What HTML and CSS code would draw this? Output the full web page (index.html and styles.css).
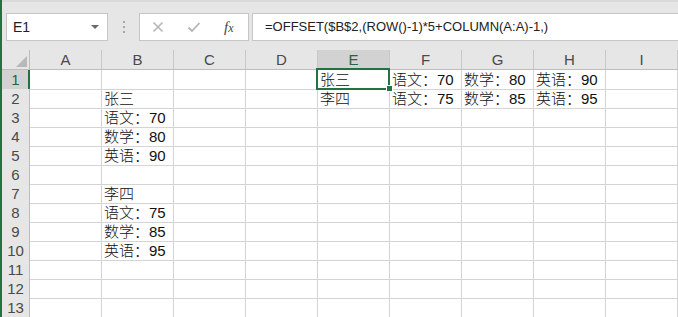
FILE: index.html
```html
<!DOCTYPE html>
<html lang="zh-CN">
<head>
  <meta charset="UTF-8">
  <title>OFFSET</title>
  <link rel="stylesheet" href="styles.css">
</head>
<body>
  <!-- Formula bar -->
  <div class="toolbar">
    <div class="name-box">
      <span>E1</span>
      <span class="caret"></span>
    </div>
    <div class="grip"><i></i><i></i><i></i></div>
    <div class="buttons">
      <svg class="btn" width="12" height="12" viewBox="0 0 12 12"><path d="M1.5 1.5 L10.5 10.5 M10.5 1.5 L1.5 10.5" stroke="#b5b5b5" stroke-width="1.6" fill="none"/></svg>
      <svg class="btn" width="14" height="12" viewBox="0 0 14 12"><path d="M1.5 6.5 L5 10 L12.5 2" stroke="#b5b5b5" stroke-width="1.8" fill="none"/></svg>
      <span class="fx">f<small>x</small></span>
    </div>
    <div class="formula">=OFFSET($B$2,(ROW()-1)*5+COLUMN(A:A)-1,)</div>
  </div>

  <!-- Sheet -->
  <div class="sheet">
    <div class="row head">
      <div class="corner"></div>
      <div class="ch">A</div><div class="ch">B</div><div class="ch">C</div><div class="ch">D</div>
      <div class="ch sel">E</div><div class="ch">F</div><div class="ch">G</div><div class="ch">H</div><div class="ch">I</div>
    </div>
    <div class="row">
      <div class="rh sel">1</div>
      <div class="c"></div><div class="c"></div><div class="c"></div><div class="c"></div>
      <div class="c active">张三</div><div class="c">语文：70</div><div class="c">数学：80</div><div class="c">英语：90</div><div class="c"></div>
    </div>
    <div class="row">
      <div class="rh">2</div>
      <div class="c"></div><div class="c">张三</div><div class="c"></div><div class="c"></div>
      <div class="c">李四</div><div class="c">语文：75</div><div class="c">数学：85</div><div class="c">英语：95</div><div class="c"></div>
    </div>
    <div class="row">
      <div class="rh">3</div>
      <div class="c"></div><div class="c">语文：70</div><div class="c"></div><div class="c"></div>
      <div class="c"></div><div class="c"></div><div class="c"></div><div class="c"></div><div class="c"></div>
    </div>
    <div class="row">
      <div class="rh">4</div>
      <div class="c"></div><div class="c">数学：80</div><div class="c"></div><div class="c"></div>
      <div class="c"></div><div class="c"></div><div class="c"></div><div class="c"></div><div class="c"></div>
    </div>
    <div class="row">
      <div class="rh">5</div>
      <div class="c"></div><div class="c">英语：90</div><div class="c"></div><div class="c"></div>
      <div class="c"></div><div class="c"></div><div class="c"></div><div class="c"></div><div class="c"></div>
    </div>
    <div class="row">
      <div class="rh">6</div>
      <div class="c"></div><div class="c"></div><div class="c"></div><div class="c"></div>
      <div class="c"></div><div class="c"></div><div class="c"></div><div class="c"></div><div class="c"></div>
    </div>
    <div class="row">
      <div class="rh">7</div>
      <div class="c"></div><div class="c">李四</div><div class="c"></div><div class="c"></div>
      <div class="c"></div><div class="c"></div><div class="c"></div><div class="c"></div><div class="c"></div>
    </div>
    <div class="row">
      <div class="rh">8</div>
      <div class="c"></div><div class="c">语文：75</div><div class="c"></div><div class="c"></div>
      <div class="c"></div><div class="c"></div><div class="c"></div><div class="c"></div><div class="c"></div>
    </div>
    <div class="row">
      <div class="rh">9</div>
      <div class="c"></div><div class="c">数学：85</div><div class="c"></div><div class="c"></div>
      <div class="c"></div><div class="c"></div><div class="c"></div><div class="c"></div><div class="c"></div>
    </div>
    <div class="row">
      <div class="rh">10</div>
      <div class="c"></div><div class="c">英语：95</div><div class="c"></div><div class="c"></div>
      <div class="c"></div><div class="c"></div><div class="c"></div><div class="c"></div><div class="c"></div>
    </div>
    <div class="row">
      <div class="rh">11</div>
      <div class="c"></div><div class="c"></div><div class="c"></div><div class="c"></div>
      <div class="c"></div><div class="c"></div><div class="c"></div><div class="c"></div><div class="c"></div>
    </div>
    <div class="row">
      <div class="rh">12</div>
      <div class="c"></div><div class="c"></div><div class="c"></div><div class="c"></div>
      <div class="c"></div><div class="c"></div><div class="c"></div><div class="c"></div><div class="c"></div>
    </div>
    <div class="row">
      <div class="rh">13</div>
      <div class="c"></div><div class="c"></div><div class="c"></div><div class="c"></div>
      <div class="c"></div><div class="c"></div><div class="c"></div><div class="c"></div><div class="c"></div>
    </div>
  </div>
</body>
</html>
```

FILE: styles.css
```css
/* Reset */
* {
  margin: 0;
  padding: 0;
  box-sizing: border-box;
}
body {
  width: 678px;
  height: 317px;
  overflow: hidden;
  background-color: #fff;
  border-left: 2px solid #217346;
  font-family: "Liberation Sans", "Noto Sans CJK SC", sans-serif;
}

/* Formula bar */
.toolbar {
  height: 50px;
  display: flex;
  align-items: flex-start;
  padding: 11px 0 0 4px;
  background-color: #e6e6e6;
  border-top: 2px solid #dadada;
}
.name-box {
  width: 102px;
  height: 28px;
  display: flex;
  align-items: center;
  justify-content: space-between;
  padding: 0 6px 0 6px;
  background-color: #fff;
  border: 1px solid #c6c6c6;
  font-size: 14px;
  color: #222;
}
.caret {
  width: 0;
  height: 0;
  border-left: 4px solid transparent;
  border-right: 4px solid transparent;
  border-top: 4px solid #6a6a6a;
  margin-right: 2px;
}
.grip {
  width: 31px;
  height: 28px;
  display: flex;
  flex-direction: column;
  align-items: center;
  justify-content: center;
  gap: 3px;
}
.grip i {
  width: 2px;
  height: 2px;
  background-color: #a8a8a8;
}
.buttons {
  width: 110px;
  height: 28px;
  display: flex;
  align-items: center;
  padding-left: 12px;
  background-color: #fff;
  border: 1px solid #c6c6c6;
}
.btn {
  display: block;
  margin-right: 23px;
}
.fx {
  font-family: "Liberation Serif", serif;
  font-style: italic;
  font-size: 15px;
  color: #444;
}
.fx small {
  font-size: 12px;
}
.formula {
  flex: 1;
  height: 28px;
  margin-left: 3px;
  margin-right: -2px;
  padding-left: 12px;
  line-height: 26px;
  background-color: #fff;
  border: 1px solid #c6c6c6;
  font-size: 13px;
  color: #222;
}

/* Sheet grid */
.row {
  display: grid;
  grid-template-columns: 28px repeat(9, 72px);
  height: 19px;
}
.row.head {
  height: 20px;
  background-color: #e6e6e6;
}
.corner {
  position: relative;
  border-right: 1px solid #bdbdbd;
  border-bottom: 1px solid #bdbdbd;
}
.corner::after {
  content: "";
  position: absolute;
  right: 2px;
  bottom: 2px;
  width: 0;
  height: 0;
  border-left: 11px solid transparent;
  border-bottom: 11px solid #b8b8b8;
}
.ch {
  text-align: center;
  line-height: 19px;
  font-size: 15px;
  color: #4a4a4a;
  border-right: 1px solid #c8c8c8;
  border-bottom: 1px solid #bdbdbd;
}
.ch.sel {
  background-color: #d2d2d2;
  color: #2a6340;
}
.rh {
  position: relative;
  text-align: center;
  line-height: 19px;
  font-size: 15px;
  color: #4a4a4a;
  background-color: #e6e6e6;
  border-right: 1px solid #bdbdbd;
  border-bottom: 1px solid #cbcbcb;
}
.rh.sel {
  background-color: #d2d2d2;
  color: #2a6340;
}
.rh.sel::after {
  content: "";
  position: absolute;
  top: 0;
  right: -1px;
  bottom: -1px;
  width: 2px;
  background-color: #217346;
}
.c {
  position: relative;
  padding-left: 2px;
  line-height: 19px;
  font-size: 15px;
  font-weight: 300;
  color: #111;
  white-space: nowrap;
  border-right: 1px solid #d4d4d4;
  border-bottom: 1px solid #d4d4d4;
}
.c.active::before {
  content: "";
  position: absolute;
  top: -2px;
  left: -2px;
  right: -1px;
  bottom: -1px;
  border: 2px solid #217346;
  z-index: 1;
}
.c.active::after {
  content: "";
  position: absolute;
  right: -4px;
  bottom: -3px;
  width: 5px;
  height: 5px;
  background-color: #217346;
  border: 1px solid #fff;
  box-sizing: content-box;
  z-index: 2;
}
```
